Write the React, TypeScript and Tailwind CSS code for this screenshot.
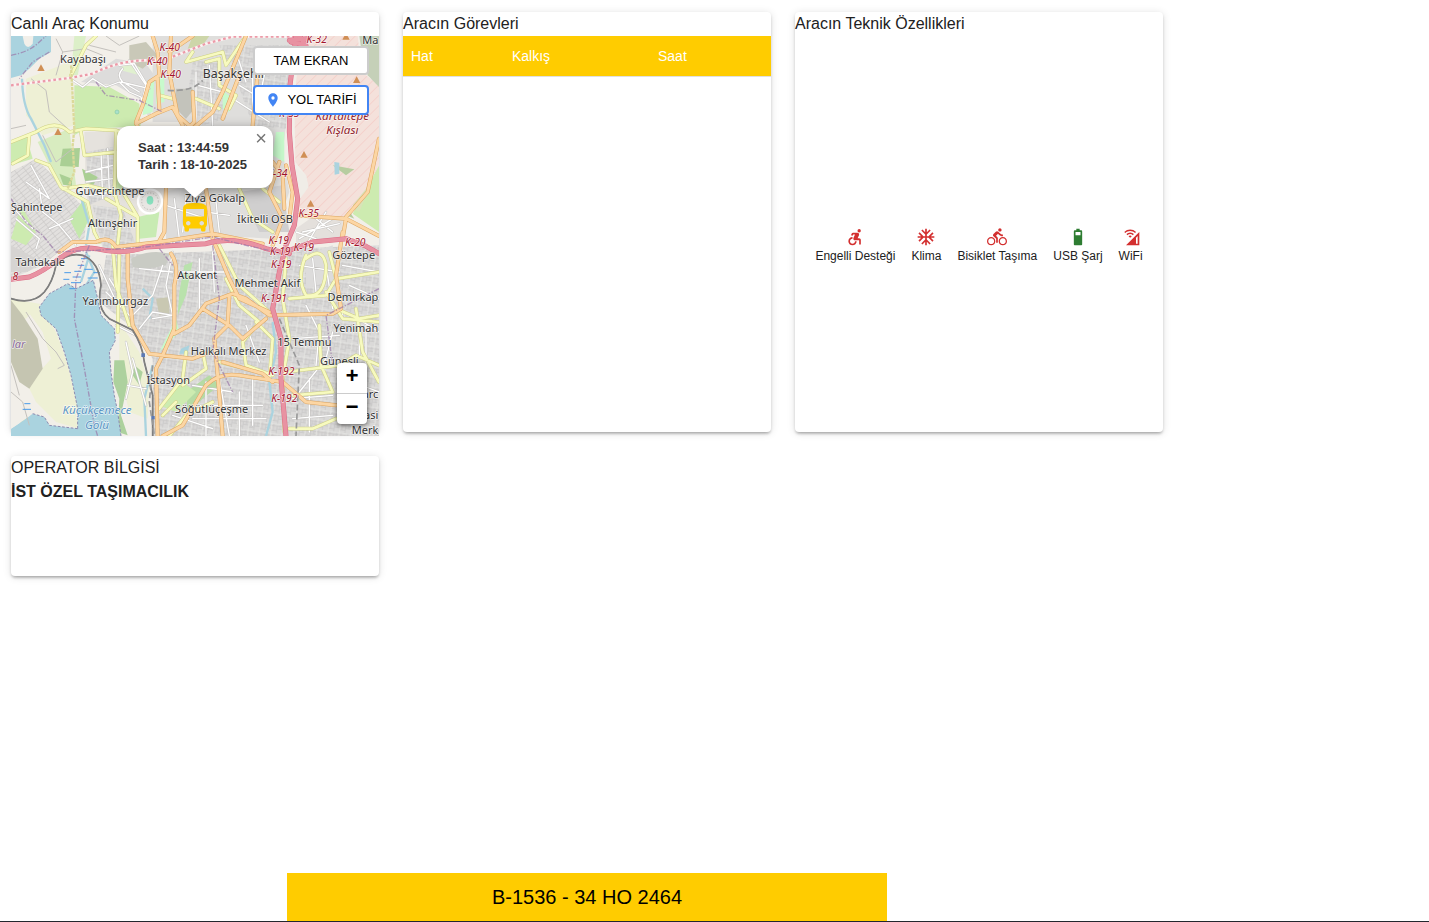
import { ReactNode } from 'react'
import {
    MdAccessibleForward,
    MdAcUnit,
    MdCellWifi,
    MdDirectionsBike,
    MdDirectionsBus,
    MdLocationOn,
} from 'react-icons/md'

function BatteryIcon({ className }: { className?: string }) {
    return (
        <svg viewBox="0 0 24 24" fill="currentColor" className={className}>
            <path
                fillRule="evenodd"
                d="M15.67 4H14V2h-4v2H8.33C7.6 4 7 4.6 7 5.33v15.33C7 21.4 7.6 22 8.33 22h7.33c.74 0 1.34-.6 1.34-1.33V5.33C17 4.6 16.4 4 15.67 4zM9 6h6v4H9z"
            />
        </svg>
    )
}

const features = [
    { label: 'Engelli Desteği', icon: MdAccessibleForward, active: false },
    { label: 'Klima', icon: MdAcUnit, active: false },
    { label: 'Bisiklet Taşıma', icon: MdDirectionsBike, active: false },
    { label: 'USB Şarj', icon: BatteryIcon, active: true },
    { label: 'WiFi', icon: MdCellWifi, active: false },
]

// land use areas
const areas: [string, string][] = [
    // residential
    ['M15 420 L90 380 L190 480 L245 540 L235 620 L170 650 L110 700 L15 740Z', 'url(#streetsA)'],
    ['M225 150 L330 80 L420 95 L460 150 L430 260 L400 200 L330 160Z', '#dddcdb'],
    ['M235 300 L420 290 L540 300 L560 470 L520 500 L400 500 L390 640 L260 610 L240 480Z', '#e5e2dd'],
    ['M240 360 L320 345 L335 480 L250 520Z', 'url(#streetsB)'],
    ['M440 12 L870 12 L850 200 L830 360 L850 480 L800 620 L600 610 L560 480 L530 270 L440 270Z', '#dfdedc'],
    ['M560 90 L640 80 L660 260 L590 280 L540 220Z', 'url(#streetsB)'],
    ['M640 40 L850 40 L840 290 L740 280 L690 140Z', 'url(#streetsB)'],
    ['M260 520 L350 530 L390 640 L290 650Z', 'url(#streetsB)'],
    ['M300 670 L1119 640 L1119 1212 L440 1212 L440 980 L370 880 L280 810Z', 'url(#streetsB)'],
    ['M700 480 L830 460 L850 600 L760 600Z', '#d0cfcf'],
    ['M480 480 L540 460 L600 520 L600 620 L480 620Z', '#dddcdb'],
    ['M870 590 L940 540 L1010 560 L1010 615 L870 640Z', '#e4e0dc'],
    ['M900 670 L980 640 L990 740 L900 770Z', '#dddcdb'],
    ['M15 640 L110 690 L60 720 L15 720Z', '#d6d4d2'],
    // farmland
    ['M60 140 L190 90 L205 280 L110 310 L60 250Z', '#eef0d5'],
    ['M100 815 L150 900 L180 980 L200 1060 L230 1130 L220 1190 L150 1170 L90 1110 L65 1060 L135 980 L110 900 L60 830Z', '#eef0d5'],
    ['M340 870 L400 960 L430 1060 L425 1160 L370 1140 L340 1020Z', '#eef0d5'],
    ['M15 800 L100 815 L60 860 L15 860Z', '#eef0d5'],
    ['M1040 545 L1119 400 L1119 600Z', '#cdebb0'],
    // grass
    ['M205 160 L310 165 L400 215 L405 300 L370 285 L240 290 L205 310Z', '#cdebb0'],
    ['M350 100 L405 90 L400 130 L345 115Z', '#e0f0cf'],
    ['M15 330 L60 310 L80 380 L15 400Z', '#cdebb0'],
    ['M15 620 L45 520 L90 600 L60 640Z', '#cdebb0'],
    ['M95 330 L190 290 L210 460 L160 460Z', '#d8ecc0'],
    ['M190 560 L235 500 L250 560 L220 620Z', '#c4e8ac'],
    ['M395 555 L460 540 L450 615 L400 620Z', '#c8ebb3'],
    ['M330 300 L360 300 L350 480 L325 480Z', '#cdebb0'],
    ['M535 700 L560 690 L540 790 L515 850 L520 780Z', '#b9e2ac'],
    ['M460 960 L520 900 L510 860 L475 930Z', '#c8facc'],
    ['M540 1080 L610 1030 L640 1060 L590 1100 L545 1140Z', '#b6dba4'],
    ['M460 1120 L530 1050 L570 1080 L510 1140Z', '#cdebb0'],
    ['M420 150 L445 140 L440 240 L410 250Z', '#c8facc'],
    ['M455 130 L475 130 L475 210 L450 215Z', '#c8facc'],
    ['M650 175 L680 200 L670 240 L650 230Z', '#c8facc'],
    ['M810 300 L835 300 L835 390 L800 370Z', '#c8facc'],
    ['M205 12 L240 12 L215 130 L195 130Z', '#dcefc8'],
    ['M560 12 L610 12 L590 40 L545 50Z', '#cdd6a9'],
    // woods
    ['M170 350 L222 348 L218 405 L162 402Z', '#aacf94'],
    ['M160 425 L198 440 L198 462 L172 458Z', '#aacf94'],
    ['M228 410 L275 435 L262 458 L238 450Z', '#aacf94'],
    ['M325 985 L355 985 L365 1050 L345 1150 L365 1210 L335 1200 L340 1100 L322 1050Z', '#add19e'],
    ['M385 1000 L410 1020 L400 1060 L380 1030Z', '#add19e'],
    ['M45 1150 L65 1160 L62 1190 L42 1180Z', '#add19e'],
    ['M1050 400 L1100 370 L1085 480 L1060 540 L1040 530Z', '#d9e3b8'],
    ['M1005 500 L1045 560 L1010 545 L970 520Z', '#b7cda0'],
    // scrub and quarry
    ['M15 805 L50 850 L95 920 L110 1010 L70 1070 L40 1050 L15 990Z', '#c5c5b1'],
    ['M370 40 L420 30 L455 70 L410 110 L370 90Z', '#c9c8b8'],
    ['M510 170 L560 170 L565 230 L540 260 L505 225Z', '#c3c3bb'],
    ['M450 800 L490 795 L490 850 L460 850Z', '#c9c8b2'],
    ['M375 680 Q430 650 490 665 L480 700 Q420 715 380 705Z', '#c9cbc4'],
    // military zone
    ['M885 12 L1055 12 L1060 60 L1080 130 L1119 160 L1119 400 L1080 470 L1040 520 L1020 555 L880 550 L880 500 L905 460 L900 430 L868 390 L865 200Z', '#f4e1db'],
    ['M885 12 L1055 12 L1060 60 L1080 130 L1119 160 L1119 400 L1080 470 L1040 520 L1020 555 L880 550 L880 500 L905 460 L900 430 L868 390 L865 200Z', 'url(#hatch)'],
    ['M1060 12 L1119 12 L1119 165 L1085 130 L1070 80Z', '#c5d0b8'],
    ['M860 400 L900 430 L908 465 L882 500 L860 470Z', '#f0ede7'],
    ['M980 400 L1045 412 L1020 430Z', '#b7cda0'],
    // water
    ['M15 12 L135 12 L135 60 L100 80 L70 110 L45 130 L15 138Z', '#aad3df'],
    ['M50 12 L82 12 L80 35 Q65 55 55 35Z', '#f2efe9'],
    ['M185 755 L210 770 L262 745 L275 800 L285 850 L325 890 L328 925 L310 960 L315 1020 L325 1090 L335 1140 L345 1212 L15 1212 L15 1190 L60 1160 L80 1145 L115 1155 L130 1180 L215 1190 L215 1130 L195 1030 L175 960 L150 890 L105 850 L100 825 L130 785Z', '#aad3df'],
    ['M15 1050 L70 1140 L60 1160 L15 1190Z', '#f2efe9'],
    ['M985 390 L1000 392 L1000 425 L986 428Z', '#aad3df'],
    ['M525 950 L550 940 L545 965 L520 965Z', '#aad3df'],
]

const streams = [
    'M48 140 Q50 220 75 260 L115 340 L135 390',
    'M220 480 L250 580 L240 640',
    'M240 660 L265 720 L240 760 M250 670 L225 750',
    'M800 870 L810 960 L790 1050 L800 1140 L780 1212',
    'M410 770 L440 800 L430 860',
    'M440 1000 L415 1100 L420 1212',
]

// thin white local streets
const streets = [
    'M200 145 L230 165 L260 140 L300 165 L340 150 L370 180 L405 195 L410 220 M350 110 Q330 130 350 150 L400 180 M370 85 L420 160 L410 200 M340 100 L385 95 L430 170 L345 150',
    'M100 470 L110 540 L160 580 L210 640 M75 400 L130 500 L60 450 M30 560 L100 620 L90 650 M15 520 L80 590 M130 590 L200 560',
    'M285 360 L290 500 M240 420 L320 400 M240 450 L320 440 M250 490 L320 480 M305 350 L310 480',
    'M500 660 L480 760 L500 850 M400 710 L500 720 M440 860 L500 850 L440 840 L400 890 M380 850 L440 790 L470 700 M520 720 L660 720 M580 680 L580 850 M620 660 L625 780',
    'M505 500 L520 620 M480 520 L600 560 M540 490 L530 600 M630 510 L640 600 M600 540 L670 550',
    'M700 160 L830 240 M680 200 L790 270 M740 130 L740 280 M790 60 L760 200 M690 60 L720 150 M570 120 L570 270 M610 100 L620 280 M575 160 L650 180',
    'M880 620 L980 560 M900 640 L960 540 M870 600 L930 620 M930 560 L980 600 M890 600 L1000 575',
    'M720 880 L760 990 M560 1060 L680 1080 M560 1120 L770 1120 M600 1050 L600 1212 M700 1080 L700 1212 M740 1040 L740 1180 M560 1160 L780 1160 M640 1040 L670 1210 M500 1150 L620 1190',
    'M900 820 L940 900 L930 1000 M860 920 L1000 910 M880 1080 L960 980 L980 900 M1000 760 L1010 850 M860 1100 L980 1090 M860 1160 L980 1150 M1060 900 L1060 980 M910 1040 L910 1200 M880 700 L1000 720 M920 680 L930 780 M960 700 L980 830',
    'M310 740 L360 820 M300 780 L370 850 M280 700 L340 830 M330 880 L410 920',
    'M360 930 L380 1020 L360 1100 M380 980 L420 1120 M365 1060 L420 1070',
    'M1030 760 L1119 800 M1040 850 L1119 900 M1010 700 L1119 720 M1040 1050 L1119 1080 M1080 870 L1080 1000',
]

// field paths and tracks
const tracks = [
    'M75 140 L120 175 L130 240 L185 290 M150 20 L170 60 L150 130 M170 60 L240 50 L290 70 M250 40 L330 60 M300 12 L340 40 L400 12',
    'M60 840 L110 920 L150 960 L175 1000 L155 1010 M15 1080 L50 1110 L70 1180 M15 1000 L40 1090',
    'M560 500 L600 480 M640 300 L700 330 M110 310 L150 390 L200 350 M15 290 L60 280',
]

const yellowRoads = [
    'M15 330 L90 300 Q150 260 190 300 L240 290 L330 295 L420 330',
    'M70 310 L65 370 L20 395 M90 385 L130 400 L165 465 L245 510 L265 600 L280 630',
    'M225 300 L235 370 L330 360 L325 480 L245 460 L170 470 M325 480 L345 550 L335 640',
    'M330 300 L325 490 M300 500 L395 555 L395 640 M350 480 L395 555',
    'M195 130 L240 40 L270 12 M560 60 L540 90 L650 60 L660 100 L720 12',
    'M600 90 L640 80 L640 160 L690 190 L670 230 M460 190 L500 200 M570 200 L640 230',
    'M320 640 L330 760 L370 880 M340 660 L335 900',
    'M640 640 L700 760 L790 840 M700 470 L740 560 L800 600 M770 470 L820 510',
    'M660 740 L700 820 L760 870 L710 930 L720 1000 L800 1030 M750 870 L800 920 L790 1040',
    'M540 960 L530 1040 L460 1130 M590 960 L600 1010 L530 1060 M640 990 L760 1020',
    'M840 680 L830 800 L850 920 L830 1040 L835 1200 M850 800 L960 790 L990 740 L970 660 M900 670 Q870 740 900 790 Q960 800 960 700 Q950 640 900 680',
    'M995 740 L1119 720 M990 830 L1060 860 L1119 850 M960 780 L1010 860 L1119 870 M840 1020 L1000 1000 L1050 970 L1119 1000',
    'M940 880 L945 1000 L980 1080 L860 1090 M850 1190 L920 1190 L990 1160 M1050 830 L1070 960 L1119 1050',
    'M490 1212 L540 1150 L620 1110 M470 1150 L510 1110',
]

const orangeRoads = [
    'M440 12 L455 60 L460 130 L430 150 L410 220 L390 270 L400 300',
    'M495 12 L490 120 L505 200 L515 250 L560 290 L620 240 L650 180 L700 60 L720 12',
    'M390 275 L450 245 L500 225 L530 280 M455 140 L460 230 M560 12 L505 50 L490 60',
    'M560 180 L565 270 L545 290 M760 70 L740 280 M700 130 L650 260',
    'M480 470 L475 600 L455 635 M600 470 L620 620 L670 740 L700 800 L790 840',
    'M160 660 L200 630 L270 630 Q310 610 330 645 L460 630 L620 605 L770 635',
    'M365 660 L365 740 L380 880 L430 965 L560 980 L600 965',
    'M495 665 Q520 700 505 760 L505 890 L470 970 L450 1010 L455 1212',
    'M505 905 L550 880 L600 815 L680 785 L720 800 L790 850 L980 845 L1005 830 L990 730 L1010 600',
    'M590 830 L670 880 L710 920 L780 860 M670 790 L665 880 L625 920 L635 1030 L650 1212',
    'M470 1212 L530 1180 L600 1060 Q640 1020 700 1030 L830 1050 L900 1110 L990 1120',
    'M800 1050 L770 1025 L650 990 M820 390 L790 480 L830 560 L800 640',
    'M870 550 L1020 560 L1119 612 M1020 560 L1010 620 M1020 555 L1085 480 L1119 320',
    'M840 400 L860 480 L850 560 M800 390 L830 430 L835 530',
]

const motorways = [
    'M15 742 L70 735 Q110 720 160 680 Q210 640 270 650 Q350 670 420 645 L600 635 Q680 610 780 650 L850 665',
    'M870 12 L852 160 L850 300 L858 400 L875 500 L865 580 L840 640 L820 720 L800 830 L825 920 L825 1040 L840 1212',
    'M850 655 L920 630 L1020 620 L1075 640 L1119 665',
    'M855 30 L900 40 L880 12 M850 25 L905 20',
]

const rails = ['M15 800 Q80 820 115 780 Q140 750 150 700 Q180 660 230 670 Q280 690 285 760 Q270 830 310 860 L380 895 Q410 940 415 990 L440 1090 L440 1212']

const boundaries = [
    'M15 500 L60 570 L110 610 L150 660 L270 655 L420 645 L620 615 L720 640 L810 660',
    'M250 640 L210 740 L205 860 L235 1010 L265 1180 L275 1212',
    'M15 70 Q70 60 100 30 L120 12 M130 60 L80 90 L40 140',
    'M270 150 L300 190 L400 205 L470 240 M620 640 L640 800 L620 960 L680 1080',
    'M460 650 L500 700 M1119 770 L960 850 L980 1000',
]

const lakeShore =
    'M185 755 L210 770 L262 745 L275 800 L285 850 L325 890 L328 925 L310 960 L315 1020 L325 1090 L335 1140 L345 1212 M215 1190 L215 1130 L195 1030 L175 960 L150 890 L105 850 L100 825 L130 785 L185 755 M215 1190 L130 1180 L115 1155 L80 1145'

const peaks = [[105, 108], [156, 300], [1020, 14], [1052, 144], [894, 368], [914, 515]]

const places: [string, number, number][] = [
    ['Kayabaşı', 231, 93],
    ['Güvercintepe', 312, 489],
    ['Şahintepe', 92, 538],
    ['Altınşehir', 320, 584],
    ['Tahtakale', 103, 702],
    ['Yarımburgaz', 328, 818],
    ['Atakent', 574, 740],
    ['Ziya Gökalp', 627, 511],
    ['İkitelli OSB', 777, 574],
    ['Göztepe', 1043, 682],
    ['Mehmet Akif', 784, 765],
    ['15 Temmu', 895, 942],
    ['Güneşli', 1000, 998],
    ['Halkalı Merkez', 668, 968],
    ['İstasyon', 487, 1056],
    ['Söğütlüçeşme', 617, 1142],
]

// labels that run up to the right edge of the map
const edgePlaces: [string, number][] = [
    ['Ma', 29],
    ['Demirkap', 806],
    ['Yenimah', 900],
    ['arc', 1098],
    ['asi', 1161],
    ['Merk', 1205],
]

const shields: [string, number, number][] = [
    ['K-40', 491, 57],
    ['K-40', 454, 99],
    ['K-40', 494, 139],
    ['K-32', 932, 34],
    ['K-33', 850, 256],
    ['K-34', 814, 434],
    ['K-35', 908, 556],
    ['K-19', 818, 636],
    ['K-19', 823, 670],
    ['K-19', 893, 657],
    ['K-19', 826, 707],
    ['K-20', 1048, 642],
    ['K-191', 804, 809],
    ['K-192', 826, 1028],
    ['K-192', 835, 1110],
]

interface RoadsProps {
    lines: string[]
    casing: string
    fill: string
    width: number
}

function Roads({ lines, casing, fill, width }: RoadsProps) {
    const d = lines.join(' ')
    return (
        <g fill="none" strokeLinejoin="round" strokeLinecap="round">
            <path d={d} stroke={casing} strokeWidth={width + 3} />
            <path d={d} stroke={fill} strokeWidth={width} />
        </g>
    )
}

function CityMap() {
    return (
        <svg
            viewBox="15 12 1104 1200"
            preserveAspectRatio="xMidYMid slice"
            className="block h-full w-full"
            fontFamily="'Noto Sans', sans-serif"
            role="img"
            aria-label="Harita"
        >
            <defs>
                <pattern id="streetsA" width="11" height="26" patternUnits="userSpaceOnUse" patternTransform="rotate(52)">
                    <rect width="11" height="26" fill="#e2e0de" />
                    <path d="M0 0H11M0 0V26" stroke="#c4c2c1" strokeWidth="3" />
                </pattern>
                <pattern id="streetsB" width="34" height="30" patternUnits="userSpaceOnUse" patternTransform="rotate(8)">
                    <rect width="34" height="30" fill="#dad9d8" />
                    <path d="M0 8H34M0 22H18M18 16H34M8 0V22M18 8V30M28 0V16" stroke="#c6c5c4" strokeWidth="2" />
                    <path d="M0 1H34M1 0V30" stroke="#e8e7e5" strokeWidth="2" />
                </pattern>
                <pattern id="hatch" width="22" height="22" patternUnits="userSpaceOnUse" patternTransform="rotate(45)">
                    <path d="M1 0V22" stroke="#f3c6c1" strokeWidth="2" />
                </pattern>
            </defs>
            <rect x="15" y="12" width="1104" height="1200" fill="#f2efe9" />
            {areas.map(([d, fill], i) => (
                <path key={i} d={d} fill={fill} />
            ))}
            <path d={streams.join(' ')} fill="none" stroke="#aad3df" strokeWidth="7" />
            <path d={tracks.join(' ')} fill="none" stroke="#c4c1bd" strokeWidth="3" />
            <path d={lakeShore} fill="none" stroke="#8d8bb0" strokeWidth="3" strokeDasharray="8 5" />
            <path
                d="M175 722h20M205 718h22M235 712h25M172 742h18M200 735h25M262 722h20M195 752h30M245 738h30M215 700h20M225 680h20M190 770h18M55 1115h18M50 1132h25"
                stroke="#4a9be8"
                strokeWidth="3"
            />
            <Roads lines={streets} casing="#c6c4c2" fill="#ffffff" width={4} />
            <circle cx="432" cy="508" r="36" fill="#e8e6e3" stroke="#fff" strokeWidth="7" />
            <circle cx="432" cy="508" r="25" fill="none" stroke="#bdbbb8" strokeWidth="3" strokeDasharray="4 5" />
            <ellipse cx="432" cy="505" rx="10" ry="13" fill="#88e0be" />
            <circle cx="333" cy="240" r="6" fill="#aae0cb" stroke="#84c9a8" strokeWidth="2" />
            <path d="M15 160 L190 138 L260 125 Q330 90 400 86 L480 82 L600 35 L680 14 L880 14" fill="none" stroke="#fbf3f2" strokeWidth="8" />
            <path
                d="M15 160 L190 138 L260 125 Q330 90 400 86 L480 82 L600 35 L680 14 L880 14"
                fill="none"
                stroke="#ec9aa8"
                strokeWidth="7"
                strokeDasharray="8 8"
            />
            <Roads lines={yellowRoads} casing="#cdcf86" fill="#f7fabf" width={8} />
            <path d="M195 100 L205 290 L200 340 L205 420 L185 470" fill="none" stroke="#dcd99a" strokeWidth="7" strokeDasharray="10 3" />
            <Roads lines={orangeRoads} casing="#dca45f" fill="#fcd6a4" width={9} />
            <Roads lines={rails} casing="#707070" fill="#8b8b8b" width={2} />
            <path d="M440 1000 L430 1110 L445 1212 M485 175 Q560 180 590 145 M820 860 L880 1000 L870 1212" fill="none" stroke="#999" strokeWidth="5" strokeDasharray="18 9" />
            <Roads lines={motorways} casing="#dc6a85" fill="#e892a2" width={12} />
            <path
                d={boundaries.join(' ')}
                fill="none"
                stroke="#9a78a8"
                strokeOpacity="0.7"
                strokeWidth="4"
                strokeDasharray="16 5 4 5"
            />
            <path d="M406 964h11v11h-11zM436 1152h10v10h-10z" fill="#5b79b5" />
            {peaks.map(([x, y]) => (
                <path key={`${x}-${y}`} d={`M${x} ${y - 11}l11 20h-22z`} fill="#d08f55" />
            ))}
            <g textAnchor="middle" stroke="#fff" strokeOpacity="0.7" strokeWidth="4" paintOrder="stroke" strokeLinejoin="round">
                <g fontSize="33" fill="#333">
                    {places.map(([name, x, y]) => (
                        <text key={name} x={x} y={y}>
                            {name}
                        </text>
                    ))}
                    {edgePlaces.map(([name, y]) => (
                        <text key={name} x="1117" y={y + (y < 40 ? 6 : 0)} textAnchor="end">
                            {name}
                        </text>
                    ))}
                    <text x="685" y="137" fontSize="37">Başakşehir</text>
                </g>
                <g fontSize="31" fontStyle="italic" fill="#a3142c">
                    {shields.map(([name, x, y]) => (
                        <text key={`${x}-${y}`} x={x} y={y}>
                            {name}
                        </text>
                    ))}
                    <text x="28" y="745">8</text>
                </g>
                <g fontSize="35" fontStyle="italic" fill="#91222c">
                    <text x="1009" y="264">Kartaltepe</text>
                    <text x="1009" y="307">Kışlası</text>
                </g>
                <g fontSize="35" fontStyle="italic" fill="#5a94c4">
                    <text x="273" y="1147">Küçükçemece</text>
                    <text x="273" y="1190">Gölü</text>
                </g>
                <text x="18" y="948" textAnchor="start" fontSize="33" fontStyle="italic" fill="#8a6a9a">lar</text>
            </g>
        </svg>
    )
}

function VehiclePopup() {
    return (
        <div className="absolute left-1/2 top-[90px] w-[156px] -translate-x-1/2 drop-shadow-[0_3px_6px_rgba(0,0,0,0.4)]">
            <div className="h-[62px] rounded-xl bg-white pt-[13px] pl-[21px] text-[13px] leading-[17px] font-bold text-[#333]">
                Saat : 13:44:59
                <br />
                Tarih : 18-10-2025
            </div>
            <svg viewBox="0 0 24 12" className="mx-auto -mt-px block h-3 w-6">
                <path d="M0 0h24L12 11z" fill="#fff" />
            </svg>
            <button
                type="button"
                aria-label="Kapat"
                className="absolute right-0 top-0 flex h-6 w-6 items-center justify-center text-xl text-[#757575]"
            >
                ×
            </button>
        </div>
    )
}

function LiveMap() {
    return (
        <div className="relative h-[400px] overflow-hidden">
            <CityMap />
            <MdDirectionsBus className="absolute left-1/2 top-[164px] size-9 -translate-x-1/2 text-[#ffcc00]" />
            <VehiclePopup />
            <div className="absolute right-2.5 top-2.5 flex w-[116px] flex-col items-center gap-2.5 text-[13px] text-black">
                <button type="button" className="h-[29px] w-full rounded border-2 border-[#ccc] bg-white">
                    TAM EKRAN
                </button>
                <button
                    type="button"
                    className="flex h-[30px] w-full items-center justify-center gap-1.5 rounded border-2 border-[#4285f4] bg-white"
                >
                    <MdLocationOn className="size-4 text-[#4285f4]" />
                    YOL TARİFİ
                </button>
            </div>
            <div className="absolute bottom-3 right-3 flex w-[30px] flex-col rounded-sm bg-white font-['Liberation_Mono',monospace] text-[22px] leading-[30px] font-bold text-black shadow-[0_1px_5px_rgba(0,0,0,0.65)]">
                <button type="button" aria-label="Yakınlaştır" className="h-[31px] border-b border-[#ccc]">
                    +
                </button>
                <button type="button" aria-label="Uzaklaştır" className="h-[30px]">
                    −
                </button>
            </div>
        </div>
    )
}

interface CardProps {
    title: string
    className: string
    children?: ReactNode
}

function Card({ title, className, children }: CardProps) {
    return (
        <section
            className={`rounded bg-white shadow-[0_3px_3px_-2px_rgba(0,0,0,0.2),0_2px_3px_0_rgba(0,0,0,0.14),0_1px_8px_0_rgba(0,0,0,0.12)] ${className}`}
        >
            <h2>{title}</h2>
            {children}
        </section>
    )
}

export default function App() {
    return (
        <div className="flex min-h-screen flex-col border-b border-[#23272e] bg-white font-['Liberation_Sans',Arial,sans-serif] text-base text-[#212121]">
            <main className="grid w-full max-w-[1174px] grid-cols-3 gap-6 px-[11px] pt-3">
                <Card title="Canlı Araç Konumu" className="h-[420px]">
                    <LiveMap />
                </Card>
                <Card title="Aracın Görevleri" className="h-[420px]">
                    <table className="w-full table-fixed border-collapse text-left text-sm text-white">
                        <thead>
                            <tr className="h-10 border-b border-[#e0e0e0] bg-[#ffcc00]">
                                <th className="w-[101px] px-2 font-normal">Hat</th>
                                <th className="w-[146px] px-2 font-normal">Kalkış</th>
                                <th className="px-2 font-normal">Saat</th>
                            </tr>
                        </thead>
                    </table>
                </Card>
                <Card title="Aracın Teknik Özellikleri" className="flex h-[420px] flex-col">
                    <ul className="flex flex-1 items-center justify-center gap-4 pt-6 text-[12px] leading-[18px]">
                        {features.map(({ label, icon: Icon, active }) => (
                            <li key={label} className="flex flex-col items-center">
                                <Icon className={`size-5 ${active ? 'text-[#2e7d32]' : 'text-[#d32f2f]'}`} />
                                {label}
                            </li>
                        ))}
                    </ul>
                </Card>
                <Card title="OPERATOR BİLGİSİ" className="h-[120px]">
                    <p className="font-bold">İST ÖZEL TAŞIMACILIK</p>
                </Card>
            </main>
            <footer className="mt-auto w-full max-w-[1174px]">
                <div className="mx-auto flex h-12 max-w-[600px] items-center justify-center bg-[#ffcc00] text-xl text-black">
                    B-1536 - 34 HO 2464
                </div>
            </footer>
        </div>
    )
}
